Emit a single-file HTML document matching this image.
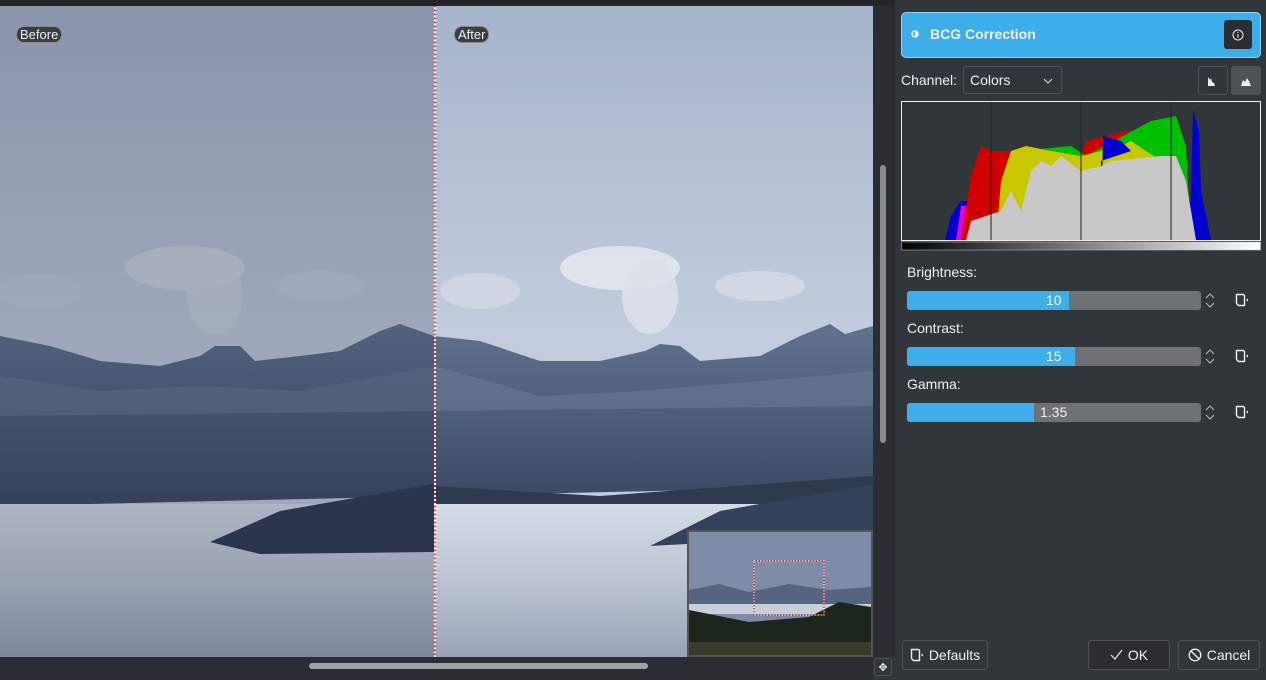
<!DOCTYPE html>
<html><head><meta charset="utf-8"><style>
*{box-sizing:border-box;margin:0;padding:0}
body{width:1266px;height:680px;background:#31363b;font-family:"Liberation Sans",sans-serif;color:#eff0f1;position:relative;overflow:hidden;font-size:14px}
.abs{position:absolute}
.btn{position:absolute;border:1px solid #4d5257;border-radius:3px;background:#31363b;display:flex;align-items:center;justify-content:center;font-size:14px;gap:5px}
.lbl{position:absolute;left:907px;font-size:14px}
.sl{position:absolute;left:907px;width:294px;height:19px;background:#6e7275;border-radius:3px;overflow:hidden}
.sl .f{position:absolute;left:0;top:0;bottom:0;background:#3daee9}
.sl span{position:absolute;top:1px;font-size:14px}
.spin{position:absolute;left:1204px}
.rs{position:absolute;left:1235px}
</style></head><body>
<div class="abs" style="left:0;top:0;width:895px;height:6px;background:#232629"></div>
<svg class="abs" style="left:0;top:6px" width="873" height="651">
<defs>
<linearGradient id="sky" x1="0" y1="0" x2="0" y2="1"><stop offset="0" stop-color="#a6b4cc"/><stop offset="0.5" stop-color="#c2ccdc"/></linearGradient>
<linearGradient id="mt" x1="0" y1="0" x2="0" y2="1"><stop offset="0" stop-color="#62728e"/><stop offset="0.4" stop-color="#52627e"/><stop offset="1" stop-color="#3a4862"/></linearGradient>
<linearGradient id="fog" x1="0" y1="0" x2="0" y2="1"><stop offset="0" stop-color="#d6dce6"/><stop offset="0.5" stop-color="#bcc4d2"/><stop offset="1" stop-color="#9aa3b6"/></linearGradient>
</defs>
<rect width="873" height="651" fill="url(#sky)"/>
<ellipse cx="185" cy="262" rx="60" ry="22" fill="#d4dae3" opacity=".7"/>
<ellipse cx="215" cy="290" rx="28" ry="38" fill="#cdd4df" opacity=".7"/>
<ellipse cx="320" cy="280" rx="45" ry="15" fill="#c8d0dc" opacity=".6"/>
<ellipse cx="40" cy="285" rx="40" ry="18" fill="#c8d0dc" opacity=".5"/>
<ellipse cx="620" cy="262" rx="60" ry="22" fill="#e4e8ee" opacity=".85"/>
<ellipse cx="650" cy="290" rx="28" ry="38" fill="#dde2ea" opacity=".85"/>
<ellipse cx="760" cy="280" rx="45" ry="15" fill="#d8dee6" opacity=".75"/>
<ellipse cx="480" cy="285" rx="40" ry="18" fill="#d8dee6" opacity=".6"/>
<polygon fill="url(#mt)" points="0,330 50,340 100,355 160,360 200,350 215,340 240,340 255,355 300,350 340,345 380,325 400,318 434,330 480,335 540,355 600,355 645,345 660,338 680,340 700,355 760,350 800,330 830,318 845,328 873,320 873,480 0,500"/>
<polygon fill="#6e7e98" opacity=".5" points="0,370 100,385 200,380 300,385 434,360 540,390 640,385 760,375 873,365 873,400 0,410"/>
<polygon fill="#2e3a4e" points="210,540 300,505 434,480 600,490 873,470 873,540 650,545 434,548 240,550"/>
<rect y="498" width="873" height="153" fill="url(#fog)"/>
<polygon fill="#2e3a52" points="210,536 280,505 434,478 434,546 260,548"/>
<polygon fill="#34425c" points="650,540 720,505 873,478 873,528"/>
<rect x="0" width="434" height="651" fill="#1e2a40" opacity=".22"/>
<line x1="435" y1="0" x2="435" y2="651" stroke="#e02020" stroke-width="2" stroke-dasharray="2,2"/>
<line x1="435" y1="1" x2="435" y2="651" stroke="#fff" stroke-width="2" stroke-dasharray="2,2"/>
</svg>
<div class="abs" style="left:16px;top:26px;padding:0 3px;height:17px;background:#3a3e42;border:1px solid #888;border-radius:8px;font-size:13px;line-height:15px">Before</div>
<div class="abs" style="left:454px;top:26px;padding:0 3px;height:17px;background:#3a3e42;border:1px solid #888;border-radius:8px;font-size:13px;line-height:15px">After</div>
<div class="abs" style="left:687px;top:530px;width:186px;height:127px;background:#2a2e32;border:2px solid #555">
<svg width="182" height="123"><rect width="182" height="123" fill="#7e8ca8"/><polygon fill="#55657e" points="0,58 30,52 60,60 100,52 140,58 182,55 182,80 0,80"/><rect y="72" width="182" height="10" fill="#c8cfd9"/><polygon fill="#1c261c" points="0,78 60,90 120,85 150,70 182,75 182,123 0,123"/><rect y="110" width="182" height="13" fill="#3a3a2a"/><rect x="65" y="29" width="70" height="54" fill="none" stroke="#fff" stroke-dasharray="1.5,1.5"/><rect x="65" y="29" width="70" height="54" fill="none" stroke="#c00" stroke-dasharray="1.5,1.5" stroke-dashoffset="1.5"/></svg></div>
<div class="abs" style="left:873px;top:6px;width:22px;height:651px;background:#2a2e32"></div>
<div class="abs" style="left:880px;top:165px;width:6px;height:278px;background:#8a8d90;border-radius:3px"></div>
<div class="abs" style="left:0;top:657px;width:873px;height:23px;background:#2a2e32"></div>
<div class="abs" style="left:309px;top:663px;width:339px;height:6px;background:#a0a3a6;border-radius:3px"></div>
<div class="btn" style="left:874px;top:658px;width:18px;height:18px;font-size:11px">✥</div>

<div class="abs" style="left:901px;top:12px;width:360px;height:46px;background:#3daee9;border:1px solid #8fd0f2;border-radius:5px"></div>
<svg class="abs" style="left:910px;top:29px" width="10" height="10"><circle cx="5" cy="5" r="3" fill="none" stroke="#fff" stroke-width="1.3"/><path d="M5 2A3 3 0 0 1 5 8Z" fill="#fff"/></svg>
<div class="abs" style="left:930px;top:26px;font-weight:bold;font-size:14px">BCG Correction</div>
<div class="abs" style="left:1224px;top:20px;width:28px;height:29px;background:#2a2e32;border-radius:3px;display:flex;align-items:center;justify-content:center"><svg width="12" height="12"><circle cx="6" cy="6" r="5" fill="none" stroke="#eee"/><path d="M6 5v4M6 3v1" stroke="#eee"/></svg></div>
<div class="abs" style="left:901px;top:72px">Channel:</div>
<div class="btn" style="left:963px;top:66px;width:99px;height:28px;justify-content:flex-start;padding-left:6px">Colors<svg style="position:absolute;right:8px;top:11px" width="10" height="6"><path d="M1 1l4 4 4-4" fill="none" stroke="#ddd"/></svg></div>
<div class="btn" style="left:1198px;top:66px;width:30px;height:29px"><svg width="12" height="12"><path d="M1 11V2l2 3 1-2 1 4 2 1 1 3h3v0Z" fill="#eee"/></svg></div>
<div class="btn" style="left:1231px;top:66px;width:30px;height:29px;background:#4d5257"><svg width="12" height="12"><path d="M1 11l2-6 2 2 2-4 2 3 2 5Z" fill="#eee"/></svg></div>
<svg class="abs" style="left:901px;top:101px" width="360" height="150">
<rect x=".5" y=".5" width="359" height="139" fill="#31363b" stroke="#eee"/>
<polygon fill="#0000d0" points="44,139 50,115 60,100 290,100 292,8 298,30 300,90 310,139"/>
<polygon fill="#00c0c0" points="230,139 240,100 285,100 295,139"/>
<polygon fill="#e000e0" points="55,139 60,105 75,105 80,139"/>
<polygon fill="#d00000" points="60,139 70,75 80,45 90,50 100,50 110,50 180,55 185,40 225,30 240,30 250,139"/>
<polygon fill="#00c000" points="140,48 170,45 185,55 250,20 275,15 285,45 290,139 140,139"/>
<polygon fill="#c8c800" points="95,139 100,80 110,50 125,45 150,50 180,55 220,45 230,40 260,60 270,139"/>
<polygon fill="#0000d0" points="200,139 202,35 220,40 230,50 200,60"/>
<polygon fill="#c8c8c8" points="65,139 70,120 100,110 110,90 120,110 130,70 140,60 150,65 160,55 180,70 200,65 210,60 260,55 275,55 285,80 295,139"/>
<line x1="90" y1="1" x2="90" y2="139" stroke="#222"/><line x1="180" y1="1" x2="180" y2="139" stroke="#222"/><line x1="270" y1="1" x2="270" y2="139" stroke="#222"/>
<defs><linearGradient id="g" x1="0" x2="1"><stop offset="0" stop-color="#000"/><stop offset="1" stop-color="#fff"/></linearGradient></defs>
<rect x=".5" y="141" width="359" height="8" fill="url(#g)" stroke="#ccc" stroke-width=".5"/>
</svg>
<div class="lbl" style="top:264px">Brightness:</div>
<div class="sl" style="top:291px"><div class="f" style="width:162px"></div><span style="left:139px">10</span></div>
<div class="lbl" style="top:320px">Contrast:</div>
<div class="sl" style="top:347px"><div class="f" style="width:168px"></div><span style="left:139px">15</span></div>
<div class="lbl" style="top:376px">Gamma:</div>
<div class="sl" style="top:403px"><div class="f" style="width:127px"></div><span style="left:133px">1.35</span></div>
<svg class="spin" style="top:291px" width="12" height="19"><path d="M2 7l4-4 4 4M2 12l4 4 4-4" fill="none" stroke="#bbb"/></svg>
<svg class="spin" style="top:347px" width="12" height="19"><path d="M2 7l4-4 4 4M2 12l4 4 4-4" fill="none" stroke="#bbb"/></svg>
<svg class="spin" style="top:403px" width="12" height="19"><path d="M2 7l4-4 4 4M2 12l4 4 4-4" fill="none" stroke="#bbb"/></svg>
<svg class="rs" style="top:293px" width="14" height="14"><path d="M1.5 1.5h7l1 1v10h-6l-2-2Z" fill="none" stroke="#eee" stroke-width="1.4"/><path d="M11 7l2-1.5v3Z" fill="#eee"/></svg>
<svg class="rs" style="top:349px" width="14" height="14"><path d="M1.5 1.5h7l1 1v10h-6l-2-2Z" fill="none" stroke="#eee" stroke-width="1.4"/><path d="M11 7l2-1.5v3Z" fill="#eee"/></svg>
<svg class="rs" style="top:405px" width="14" height="14"><path d="M1.5 1.5h7l1 1v10h-6l-2-2Z" fill="none" stroke="#eee" stroke-width="1.4"/><path d="M11 7l2-1.5v3Z" fill="#eee"/></svg>
<div class="btn" style="left:902px;top:640px;width:86px;height:30px"><svg width="14" height="14"><path d="M1.5 1.5h7l1 1v10h-6l-2-2Z" fill="none" stroke="#eee" stroke-width="1.4"/><path d="M11 7l2-1.5v3Z" fill="#eee"/></svg>Defaults</div>
<div class="btn" style="left:1088px;top:640px;width:82px;height:30px;background:#2a2e32"><svg width="13" height="12"><path d="M1 6l4 4 7-9" fill="none" stroke="#eee" stroke-width="1.2"/></svg>OK</div>
<div class="btn" style="left:1178px;top:640px;width:82px;height:30px"><svg width="14" height="14"><circle cx="7" cy="7" r="5.8" fill="none" stroke="#eee" stroke-width="1.3"/><path d="M3 3l8 8" stroke="#eee" stroke-width="1.3"/></svg>Cancel</div>
</body></html>
